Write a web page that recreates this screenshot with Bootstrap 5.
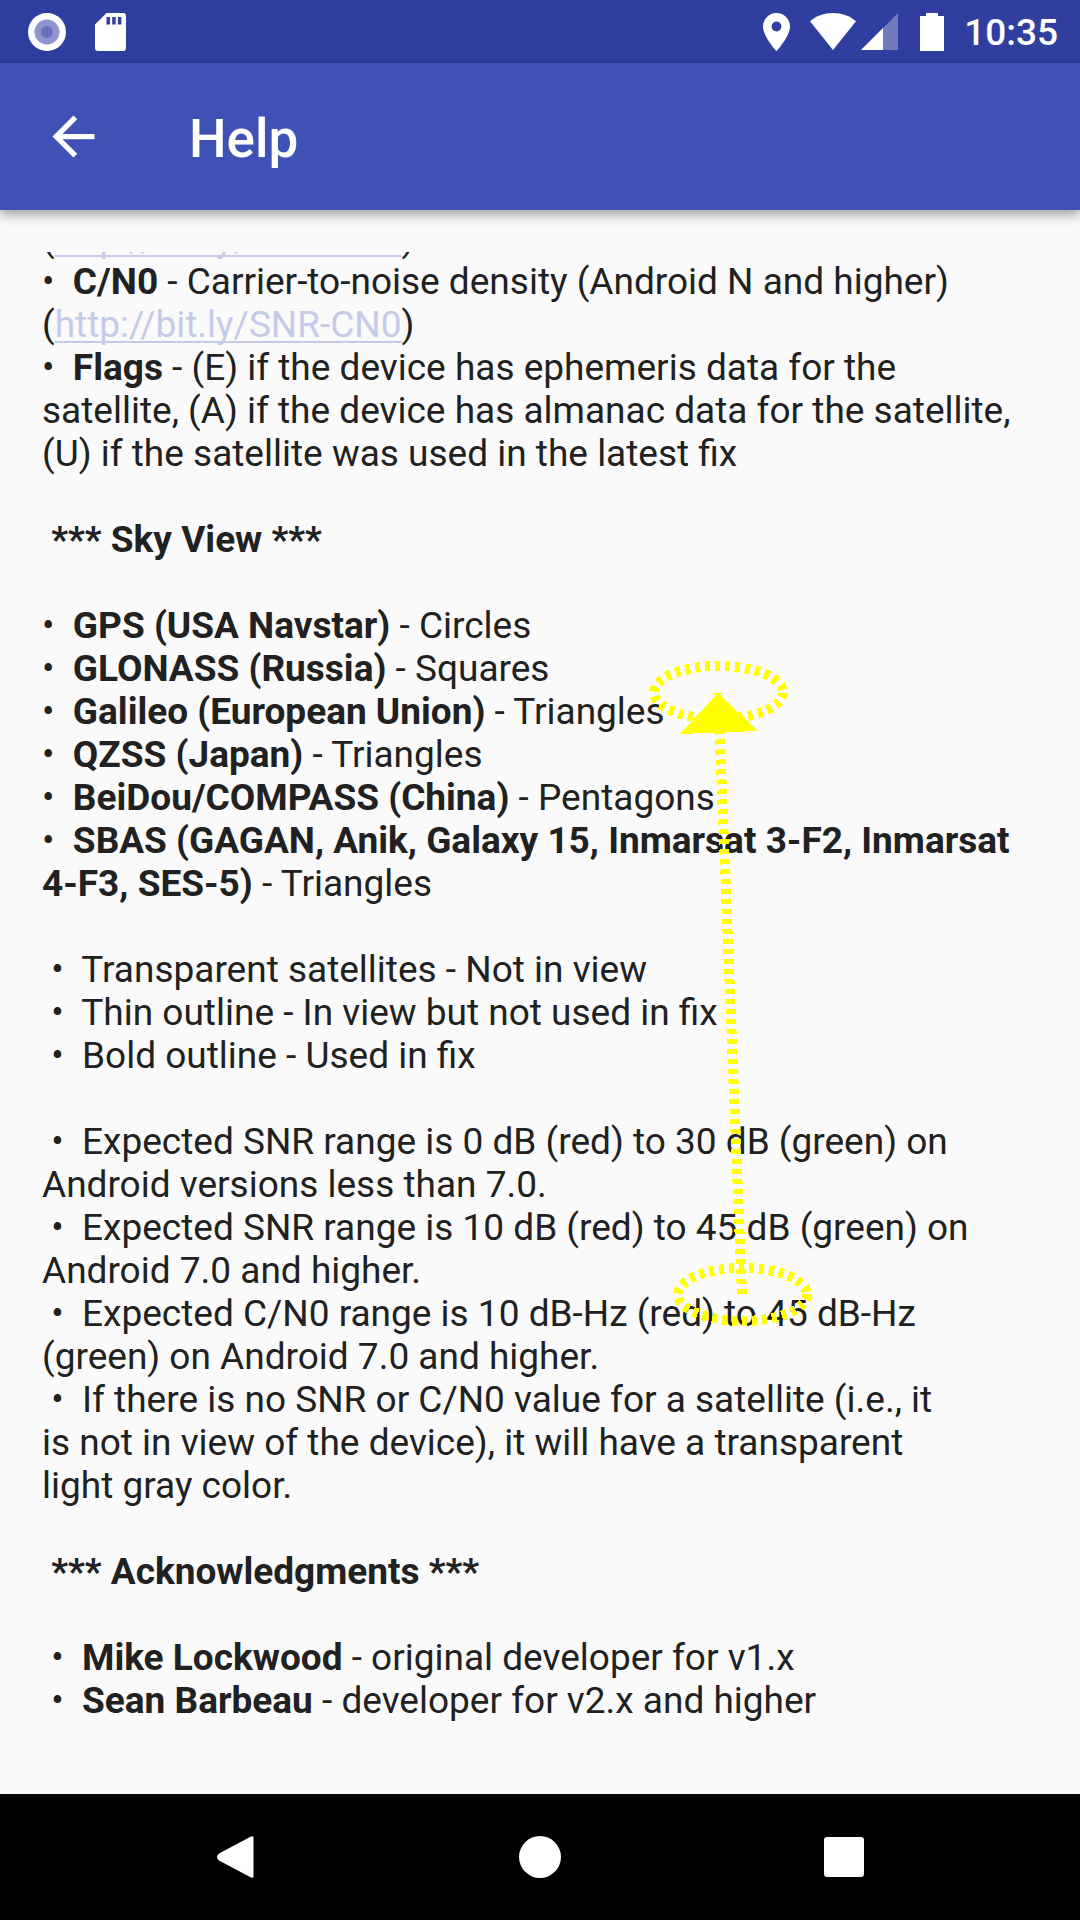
<!DOCTYPE html>
<html lang="en">
<head>
<meta charset="utf-8">
<meta name="viewport" content="width=device-width, initial-scale=1">
<title>Help</title>
<link href="https://cdn.jsdelivr.net/npm/bootstrap@5.3.0/dist/css/bootstrap.min.css" rel="stylesheet">
<style>
  body { font-family: Roboto, "Liberation Sans", sans-serif; background: #fafafa; color: #212121; }
  .status-bar { height: 63px; background: #303f9f; padding: 0 22px 0 28px; }
  .status-left { gap: 29px; }
  .status-right { gap: 20px; }
  .signal-pair { gap: 5px; }
  .status-time { font-size: 37px; line-height: 44px; font-weight: 500; padding-top: 3px; }
  .app-bar { height: 147px; background: #3f51b5; padding: 0 42px; box-shadow: 0 4px 12px rgba(0,0,0,.4); z-index: 2; }
  .back-btn { width: 63px; height: 63px; margin-right: 84px; }
  .app-title { font-size: 53px; line-height: 62px; font-weight: 500; padding-top: 4px; }
  .help-scroll { margin: 42px 42px 0; font-size: 37px; line-height: 43px; }
  .help-text { margin-top: -35px; }
  .help-text ul, .help-text h2 { margin: 0 0 43px; }
  .help-text h2 { font-size: 37px; line-height: 43px; }
  .help-text a { color: #c5cae9; text-decoration-thickness: 2px; text-underline-offset: 4px; text-decoration-skip-ink: none; }
  .nav-keys { height: 126px; gap: 260px; }
  .annotation { width: 1080px; height: 1920px; z-index: 3; }
</style>
<script src="https://cdn.jsdelivr.net/npm/bootstrap@5.3.0/dist/js/bootstrap.bundle.min.js"></script>
</head>
<body>
<div class="d-flex flex-column min-vh-100 position-relative overflow-hidden">
  <div class="status-bar d-flex align-items-center justify-content-between text-white">
    <div class="status-left d-flex align-items-center">
      <svg width="38" height="38" viewBox="0 0 38 38" aria-hidden="true"><circle cx="19" cy="19" r="19" fill="#fff"/><circle cx="19" cy="19" r="12.500" fill="#8c95cd"/><circle cx="19" cy="19" r="6" fill="#6a72ba"/></svg>
      <svg width="31" height="38" viewBox="0 0 31 38" aria-hidden="true"><path fill="#fff" fill-rule="evenodd" d="M11.500 0H28a3 3 0 0 1 3 3v32a3 3 0 0 1-3 3H3a3 3 0 0 1-3-3V11.500zM11.500 4v7.500h3.500V4zm5.700 0v7.500h3.500V4zm5.700 0v7.500h3.500V4z"/></svg>
    </div>
    <div class="status-right d-flex align-items-center">
      <svg width="27" height="38" viewBox="0 0 27 38" aria-hidden="true"><path fill="#fff" fill-rule="evenodd" d="M13.500 0A13.400 13.400 0 0 0 0 13.400C0 23.500 13.500 38 13.500 38S27 23.500 27 13.400A13.400 13.400 0 0 0 13.500 0zm0 8.600a4.900 4.900 0 1 1 0 9.800 4.900 4.900 0 0 1 0-9.800z"/></svg>
      <div class="signal-pair d-flex">
        <svg width="46" height="37" viewBox="0 0 46 37" aria-hidden="true"><path fill="#fff" d="M0 8.300C6 3 14 0 23 0s17 3 23 8.300L23 37z"/></svg>
        <svg width="37" height="37" viewBox="0 0 37 37" aria-hidden="true"><path fill="#6f79bc" d="M37 0v37H0z"/><path fill="#fff" d="M22 15v22H0z"/></svg>
      </div>
      <svg width="26" height="38" viewBox="-2 0 26 38" aria-hidden="true"><path fill="#fff" d="M6 0h12v3h6v35H0V3h6z"/></svg>
      <span class="status-time">10:35</span>
    </div>
  </div>
  <header class="app-bar d-flex align-items-center text-white position-relative">
    <button type="button" class="back-btn btn p-0 border-0 d-flex align-items-center" aria-label="Back">
      <svg width="63" height="63" viewBox="0 0 24 24" fill="#fff"><path d="M20 11H7.830l5.590-5.590L12 4l-8 8 8 8 1.410-1.410L7.830 13H20v-2z"/></svg>
    </button>
    <h1 class="app-title m-0">Help</h1>
  </header>
  <main class="help-scroll flex-grow-1 overflow-hidden">
    <div class="help-text">
      <ul class="list-unstyled">
        <li>(<a href="http://bit.ly/SNR-CN0">http://bit.ly/SNR-CN0</a>)</li>
        <li>•&nbsp; <b>C/N0</b> - Carrier-to-noise density (Android N and higher) (<a href="http://bit.ly/SNR-CN0">http://bit.ly/SNR-CN0</a>)</li>
        <li>•&nbsp; <b>Flags</b> - (E) if the device has ephemeris data for the satellite, (A) if the device has almanac data for the satellite, (U) if the satellite was used in the latest fix</li>
      </ul>
      <h2 class="fw-bold">&nbsp;*** Sky View ***</h2>
      <ul class="list-unstyled">
        <li>•&nbsp; <b>GPS (USA Navstar)</b> - Circles</li>
        <li>•&nbsp; <b>GLONASS (Russia)</b> - Squares</li>
        <li>•&nbsp; <b>Galileo (European Union)</b> - Triangles</li>
        <li>•&nbsp; <b>QZSS (Japan)</b> - Triangles</li>
        <li>•&nbsp; <b>BeiDou/COMPASS (China)</b> - Pentagons</li>
        <li>•&nbsp; <b>SBAS (GAGAN, Anik, Galaxy 15, Inmarsat 3-F2, Inmarsat 4-F3, SES-5)</b> - Triangles</li>
      </ul>
      <ul class="list-unstyled">
        <li>&nbsp;•&nbsp; Transparent satellites - Not in view</li>
        <li>&nbsp;•&nbsp; Thin outline - In view but not used in fix</li>
        <li>&nbsp;•&nbsp; Bold outline - Used in fix</li>
      </ul>
      <ul class="list-unstyled">
        <li>&nbsp;•&nbsp; Expected SNR range is 0 dB (red) to 30 dB (green) on Android versions less than 7.0.</li>
        <li>&nbsp;•&nbsp; Expected SNR range is 10 dB (red) to 45 dB (green) on Android 7.0 and higher.</li>
        <li>&nbsp;•&nbsp; Expected C/N0 range is 10 dB-Hz (red) to 45 dB-Hz<br>(green) on Android 7.0 and higher.</li>
        <li>&nbsp;•&nbsp; If there is no SNR or C/N0 value for a satellite (i.e., it<br>is not in view of the device), it will have a transparent<br>light gray color.</li>
      </ul>
      <h2 class="fw-bold">&nbsp;*** Acknowledgments ***</h2>
      <ul class="list-unstyled">
        <li>&nbsp;•&nbsp; <b>Mike Lockwood</b> - original developer for v1.x</li>
        <li>&nbsp;•&nbsp; <b>Sean Barbeau</b> - developer for v2.x and higher</li>
      </ul>
    </div>
  </main>
  <nav class="nav-keys bg-black d-flex justify-content-center align-items-center" aria-label="System">
    <button type="button" class="btn p-0 border-0 d-flex" aria-label="Back"><svg width="44" height="42" viewBox="0 0 44 42"><path fill="#fff" d="M36 .6Q38.500-.8 38.500 2v38q0 2.800-2.500 1.400L4 24.500Q0 21 4 17.500z"/></svg></button>
    <button type="button" class="btn p-0 border-0 d-flex" aria-label="Home"><svg width="42" height="42" viewBox="0 0 42 42"><circle cx="21" cy="21" r="21" fill="#fff"/></svg></button>
    <button type="button" class="btn p-0 border-0 d-flex" aria-label="Recent apps"><svg width="44" height="42" viewBox="0 0 44 42"><rect x="3" y="1" width="40" height="40" rx="3" fill="#fff"/></svg></button>
  </nav>
  <!-- gesture marks: from the lower ellipse up to the upper one -->
  <svg class="annotation position-absolute top-0 start-0 pe-none" viewBox="0 0 1080 1920" fill="none" stroke="#ff0" stroke-width="10" stroke-dasharray="5 5" shape-rendering="crispEdges" aria-hidden="true">
    <ellipse cx="718.500" cy="692.500" rx="64.500" ry="26.500"/>
    <ellipse cx="742.500" cy="1294.500" rx="64.500" ry="26.500"/>
    <path d="M742 1294L718 693"/>
    <path d="M718 693l40 38-78 3z" fill="#ff0" stroke="none"/>
  </svg>
</div>
</body>
</html>
